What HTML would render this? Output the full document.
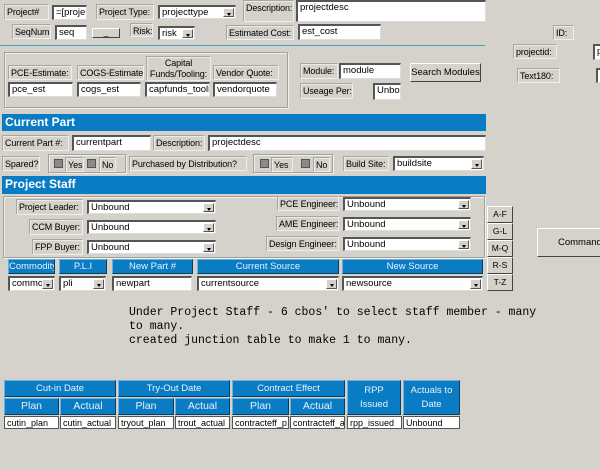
<!DOCTYPE html>
<html><head><style>
*{box-sizing:border-box;margin:0;padding:0}
body{width:600px;height:470px;background:#d5d2cc;position:relative;overflow:hidden;font-family:"Liberation Sans",sans-serif;font-size:9px;color:#000}
.a{position:absolute}
.lb{position:absolute;border:1px solid #a9a6a0;border-right-color:#f0eee9;border-bottom-color:#f0eee9;background:#d5d2cc;box-shadow:inset 1px 1px 0 #eceae5;padding:1px 2px;white-space:nowrap;overflow:hidden;line-height:12px;font-size:9px;letter-spacing:-0.1px}
.in{position:absolute;background:#fff;border-top:2px solid #555;border-left:2px solid #555;border-right:1px solid #ddd;border-bottom:1px solid #ddd;padding:0 2px;white-space:nowrap;overflow:hidden;line-height:12px;font-size:9.5px}
.cb{position:absolute;background:#fff;border-top:2px solid #555;border-left:2px solid #555;border-right:1px solid #ddd;border-bottom:1px solid #ddd;padding:0 2px;white-space:nowrap;overflow:hidden;line-height:11px;font-size:9.5px}
.cb i{position:absolute;right:1px;top:1px;width:11px;bottom:1px;background:#d5d2cc;border:1px solid;border-color:#fff #555 #555 #fff}
.cb i:after{content:"";position:absolute;left:3px;top:4px;border:2px solid transparent;border-top:3px solid #000;border-bottom:0}
.bar{position:absolute;background:#0a7cc4;color:#fff;font-weight:bold;font-size:12px;line-height:17px;padding-left:3px}
.hd{position:absolute;background:#0a7cc4;color:#e8f2fa;text-align:center;font-size:9.5px;border:1px solid;border-color:#6cb1de #0a3d63 #0a3d63 #6cb1de;line-height:13px;white-space:nowrap;overflow:hidden}
.bt{position:absolute;background:#d5d2cc;border:1px solid;border-color:#fff #444 #444 #fff;text-align:center;font-size:8.5px;white-space:nowrap}
.grp{position:absolute;border:1px solid #a3a09a;box-shadow:1px 1px 0 #f2f0ec,inset 1px 1px 0 #f2f0ec}
.ck{display:inline-block;width:9px;height:9px;background:#8a8a8a;border:1px solid #555;vertical-align:middle;margin:0 2px}
</style></head><body>
<div class="lb" style="left:4px;top:4px;width:45px;height:16px">Project#</div>
<div class="in" style="left:52px;top:5px;width:35px;height:15px">=[proje</div>
<div class="lb" style="left:96px;top:4px;width:58px;height:16px">Project Type:</div>
<div class="cb" style="left:158px;top:5px;width:78px;height:14px">projecttype<i></i></div>
<div class="lb" style="left:243px;top:0;width:51px;height:22px">Description:</div>
<div class="in" style="left:296px;top:0;width:190px;height:22px">projectdesc</div>

<div class="lb" style="left:12px;top:24px;width:39px;height:15px">SeqNum:</div>
<div class="in" style="left:55px;top:25px;width:32px;height:15px">seq</div>
<div class="bt" style="left:92px;top:28px;width:28px;height:10px;line-height:6px">_</div>
<div class="lb" style="left:130px;top:23px;width:23px;height:14px">Risk:</div>
<div class="cb" style="left:158px;top:26px;width:37px;height:14px">risk<i></i></div>
<div class="lb" style="left:226px;top:25px;width:68px;height:15px">Estimated Cost:</div>
<div class="in" style="left:298px;top:24px;width:83px;height:16px">est_cost</div>
<div class="lb" style="left:553px;top:25px;width:21px;height:15px">ID:</div>
<div class="a" style="left:0;top:45px;width:485px;height:1px;background:#4a9ccf"></div>

<div class="grp" style="left:4px;top:52px;width:284px;height:56px"></div>
<div class="lb" style="left:8px;top:65px;width:64px;height:15px">PCE-Estimate:</div>
<div class="lb" style="left:77px;top:65px;width:67px;height:15px">COGS-Estimate:</div>
<div class="lb" style="left:146px;top:56px;width:65px;height:25px;text-align:center;line-height:11px">Capital<br>Funds/Tooling:</div>
<div class="lb" style="left:213px;top:65px;width:66px;height:15px">Vendor Quote:</div>
<div class="in" style="left:8px;top:82px;width:65px;height:15px">pce_est</div>
<div class="in" style="left:77px;top:82px;width:64px;height:15px">cogs_est</div>
<div class="in" style="left:145px;top:82px;width:65px;height:15px">capfunds_toolir</div>
<div class="in" style="left:213px;top:82px;width:64px;height:15px">vendorquote</div>

<div class="lb" style="left:300px;top:63px;width:38px;height:16px">Module:</div>
<div class="in" style="left:339px;top:63px;width:62px;height:16px">module</div>
<div class="bt" style="left:410px;top:63px;width:71px;height:19px;font-size:9.5px;line-height:17px">Search Modules</div>
<div class="lb" style="left:300px;top:83px;width:53px;height:16px">Useage Per:</div>
<div class="in" style="left:373px;top:83px;width:28px;height:17px">Unbou</div>
<div class="lb" style="left:513px;top:44px;width:44px;height:15px">projectid:</div>
<div class="in" style="left:593px;top:44px;width:10px;height:16px">p</div>
<div class="lb" style="left:517px;top:68px;width:43px;height:15px">Text180:</div>
<div class="in" style="left:596px;top:68px;width:8px;height:15px">l</div>

<div class="bar" style="left:2px;top:114px;width:484px;height:17px">Current Part</div>
<div class="lb" style="left:2px;top:135px;width:67px;height:16px">Current Part #:</div>
<div class="in" style="left:72px;top:135px;width:79px;height:16px">currentpart</div>
<div class="lb" style="left:153px;top:135px;width:52px;height:16px">Description:</div>
<div class="in" style="left:208px;top:135px;width:278px;height:16px">projectdesc</div>

<div class="lb" style="left:2px;top:156px;width:38px;height:15px">Spared?</div>
<div class="grp" style="left:48px;top:154px;width:78px;height:19px"></div>
<div class="a" style="left:52px;top:158px"><span class="ck"></span></div>
<div class="lb" style="left:65px;top:157px;width:19px;height:15px">Yes</div>
<div class="a" style="left:85px;top:158px"><span class="ck"></span></div>
<div class="lb" style="left:99px;top:157px;width:17px;height:15px">No</div>
<div class="lb" style="left:129px;top:156px;width:118px;height:15px">Purchased by Distribution?</div>
<div class="grp" style="left:253px;top:154px;width:80px;height:19px"></div>
<div class="a" style="left:258px;top:158px"><span class="ck"></span></div>
<div class="lb" style="left:271px;top:157px;width:22px;height:15px">Yes</div>
<div class="a" style="left:299px;top:158px"><span class="ck"></span></div>
<div class="lb" style="left:313px;top:157px;width:17px;height:15px">No</div>
<div class="lb" style="left:343px;top:156px;width:46px;height:15px">Build Site:</div>
<div class="cb" style="left:393px;top:156px;width:91px;height:15px">buildsite<i></i></div>

<div class="bar" style="left:2px;top:176px;width:484px;height:18px">Project Staff</div>
<div class="grp" style="left:3px;top:196px;width:482px;height:62px"></div>
<div class="lb" style="left:16px;top:199px;width:67px;height:16px">Project Leader:</div>
<div class="cb" style="left:87px;top:200px;width:129px;height:14px">Unbound<i></i></div>
<div class="lb" style="left:29px;top:219px;width:54px;height:16px">CCM Buyer:</div>
<div class="cb" style="left:87px;top:220px;width:129px;height:14px">Unbound<i></i></div>
<div class="lb" style="left:32px;top:239px;width:51px;height:16px">FPP Buyer:</div>
<div class="cb" style="left:87px;top:240px;width:129px;height:14px">Unbound<i></i></div>
<div class="lb" style="left:277px;top:196px;width:62px;height:15px">PCE Engineer:</div>
<div class="cb" style="left:343px;top:197px;width:128px;height:14px">Unbound<i></i></div>
<div class="lb" style="left:276px;top:216px;width:63px;height:15px">AME Engineer:</div>
<div class="cb" style="left:343px;top:217px;width:128px;height:14px">Unbound<i></i></div>
<div class="lb" style="left:266px;top:236px;width:73px;height:15px">Design Engineer:</div>
<div class="cb" style="left:343px;top:237px;width:128px;height:14px">Unbound<i></i></div>

<div class="bt" style="left:487px;top:206px;width:26px;height:17px;line-height:15px">A-F</div>
<div class="bt" style="left:487px;top:223px;width:26px;height:17px;line-height:15px">G-L</div>
<div class="bt" style="left:487px;top:240px;width:26px;height:17px;line-height:15px">M-Q</div>
<div class="bt" style="left:487px;top:257px;width:26px;height:17px;line-height:15px">R-S</div>
<div class="bt" style="left:487px;top:274px;width:26px;height:17px;line-height:15px">T-Z</div>
<div class="bt" style="left:537px;top:228px;width:70px;height:29px;line-height:27px;font-size:9.5px;text-align:left;padding-left:20px">Command1</div>

<div class="hd" style="left:8px;top:259px;width:47px;height:15px">Commodity</div>
<div class="hd" style="left:59px;top:259px;width:48px;height:15px">P.L.I</div>
<div class="hd" style="left:112px;top:259px;width:81px;height:15px">New Part #</div>
<div class="hd" style="left:197px;top:259px;width:142px;height:15px">Current Source</div>
<div class="hd" style="left:342px;top:259px;width:141px;height:15px">New Source</div>
<div class="cb" style="left:8px;top:276px;width:47px;height:15px">commoc<i></i></div>
<div class="cb" style="left:59px;top:276px;width:47px;height:15px">pli<i></i></div>
<div class="in" style="left:112px;top:276px;width:80px;height:15px">newpart</div>
<div class="cb" style="left:197px;top:276px;width:142px;height:15px">currentsource<i></i></div>
<div class="cb" style="left:342px;top:276px;width:141px;height:15px">newsource<i></i></div>

<div class="a" style="left:129px;top:306px;font-family:'Liberation Mono',monospace;font-size:11.5px;line-height:14px;white-space:pre">Under Project Staff - 6 cbos' to select staff member - many
to many.
created junction table to make 1 to many.</div>

<div class="hd" style="left:4px;top:380px;width:112px;height:17px;line-height:15px">Cut-in Date</div>
<div class="hd" style="left:118px;top:380px;width:112px;height:17px;line-height:15px">Try-Out Date</div>
<div class="hd" style="left:232px;top:380px;width:113px;height:17px;line-height:15px">Contract Effect</div>
<div class="hd" style="left:347px;top:380px;width:54px;height:35px;line-height:14px;padding-top:3px">RPP<br>Issued</div>
<div class="hd" style="left:403px;top:380px;width:57px;height:35px;line-height:14px;padding-top:3px">Actuals to<br>Date</div>
<div class="hd" style="left:4px;top:398px;width:55px;height:17px;line-height:15px;font-size:10.5px">Plan</div>
<div class="hd" style="left:60px;top:398px;width:56px;height:17px;line-height:15px;font-size:10.5px">Actual</div>
<div class="hd" style="left:118px;top:398px;width:56px;height:17px;line-height:15px;font-size:10.5px">Plan</div>
<div class="hd" style="left:175px;top:398px;width:55px;height:17px;line-height:15px;font-size:10.5px">Actual</div>
<div class="hd" style="left:232px;top:398px;width:57px;height:17px;line-height:15px;font-size:10.5px">Plan</div>
<div class="hd" style="left:290px;top:398px;width:55px;height:17px;line-height:15px;font-size:10.5px">Actual</div>
<div class="in" style="left:4px;top:416px;width:55px;height:13px;border:1px solid #555;font-size:9px">cutin_plan</div>
<div class="in" style="left:60px;top:416px;width:56px;height:13px;border:1px solid #555;font-size:9px">cutin_actual</div>
<div class="in" style="left:118px;top:416px;width:56px;height:13px;border:1px solid #555;font-size:9px">tryout_plan</div>
<div class="in" style="left:175px;top:416px;width:55px;height:13px;border:1px solid #555;font-size:9px">trout_actual</div>
<div class="in" style="left:232px;top:416px;width:57px;height:13px;border:1px solid #555;font-size:9px">contracteff_p</div>
<div class="in" style="left:290px;top:416px;width:55px;height:13px;border:1px solid #555;font-size:9px">contracteff_a</div>
<div class="in" style="left:347px;top:416px;width:55px;height:13px;border:1px solid #555;font-size:9px">rpp_issued</div>
<div class="in" style="left:403px;top:416px;width:57px;height:13px;border:1px solid #555;font-size:9px">Unbound</div>
</body></html>
